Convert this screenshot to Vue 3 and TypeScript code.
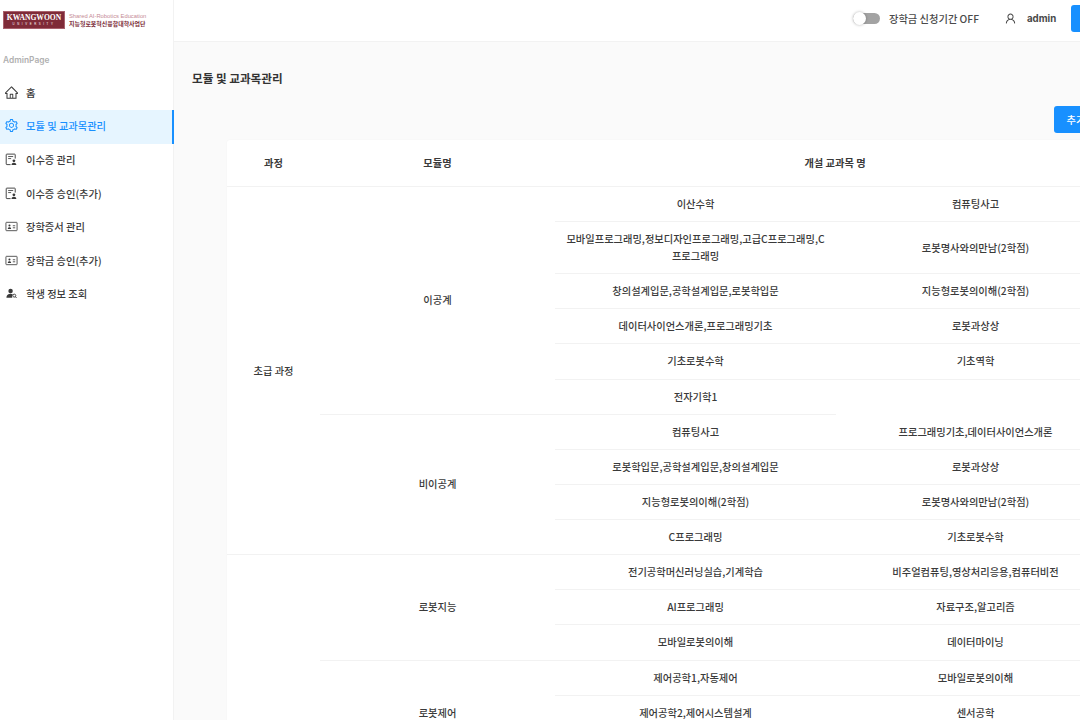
<script setup lang="ts">
interface Mod { name: string; rows: [string, string][] }
interface Section { name: string; mods: Mod[] }

const menu = [
  { label: '홈', icon: 'home' },
  { label: '모듈 및 교과목관리', icon: 'setting', active: true },
  { label: '이수증 관리', icon: 'file' },
  { label: '이수증 승인(추가)', icon: 'file' },
  { label: '장학증서 관리', icon: 'card' },
  { label: '장학금 승인(추가)', icon: 'card' },
  { label: '학생 정보 조회', icon: 'users' },
]

const sections: Section[] = [
  {
    name: '초급 과정',
    mods: [
      {
        name: '이공계',
        rows: [
          ['이산수학', '컴퓨팅사고'],
          ['모바일프로그래밍,정보디자인프로그래밍,고급C프로그래밍,C프로그래밍', '로봇명사와의만남(2학점)'],
          ['창의설계입문,공학설계입문,로봇학입문', '지능형로봇의이해(2학점)'],
          ['데이터사이언스개론,프로그래밍기초', '로봇과상상'],
          ['기초로봇수학', '기초역학'],
          ['전자기학1', ''],
        ],
      },
      {
        name: '비이공계',
        rows: [
          ['컴퓨팅사고', '프로그래밍기초,데이터사이언스개론'],
          ['로봇학입문,공학설계입문,창의설계입문', '로봇과상상'],
          ['지능형로봇의이해(2학점)', '로봇명사와의만남(2학점)'],
          ['C프로그래밍', '기초로봇수학'],
        ],
      },
    ],
  },
  {
    name: '',
    mods: [
      {
        name: '로봇지능',
        rows: [
          ['전기공학머신러닝실습,기계학습', '비주얼컴퓨팅,영상처리응용,컴퓨터비전'],
          ['AI프로그래밍', '자료구조,알고리즘'],
          ['모바일로봇의이해', '데이터마이닝'],
        ],
      },
      {
        name: '로봇제어',
        rows: [
          ['제어공학1,자동제어', '모바일로봇의이해'],
          ['제어공학2,제어시스템설계', '센서공학'],
          ['', ''],
        ],
      },
    ],
  },
]

const rowCount = (s: Section) => s.mods.reduce((n, m) => n + m.rows.length, 0)
</script>

<template>
  <div class="shell">
    <aside class="sidebar">
      <div class="logo">
        <div class="logo-mark">
          <span class="logo-name">KWANGWOON</span>
          <span class="logo-uni">UNIVERSITY</span>
        </div>
        <div class="logo-text">
          <span class="logo-en">Shared AI-Robotics Education</span>
          <span class="logo-ko">지능형로봇혁신융합대학사업단</span>
        </div>
      </div>
      <div class="admin-label">AdminPage</div>
      <nav class="menu">
        <a v-for="m in menu" :key="m.label" class="menu-item" :class="{ active: m.active }">
          <svg v-if="m.icon === 'home'" class="ic" viewBox="64 64 896 896" fill="currentColor"><path d="M946.5 505L560.1 118.8l-25.9-25.9a31.5 31.5 0 0 0-44.4 0L77.5 505a63.9 63.9 0 0 0-18.8 46c.4 35.2 29.7 63.3 64.9 63.3h42.5V940h691.8V614.3h43.4c17.1 0 33.2-6.7 45.3-18.8a63.6 63.6 0 0 0 18.7-45.3c0-17-6.7-33.1-18.8-45.2zM568 868H456V664h112v204zm217.9-325.7V868H632V640c0-22.1-17.9-40-40-40H432c-22.1 0-40 17.9-40 40v228H238.1V542.3h-96l370-369.7 23.1 23.1L882 542.3h-96.1z"/></svg>
          <svg v-else-if="m.icon === 'setting'" class="ic" viewBox="64 64 896 896" fill="currentColor"><path d="M924.8 625.7l-65.5-56c3.1-19 4.7-38.4 4.7-57.8s-1.6-38.8-4.7-57.8l65.5-56a32.03 32.03 0 0 0 9.3-35.2l-.9-2.6a443.74 443.74 0 0 0-79.7-137.9l-1.8-2.1a32.12 32.12 0 0 0-35.1-9.5l-81.3 28.9c-30-24.6-63.5-44-99.7-57.6l-15.7-85a32.05 32.05 0 0 0-25.8-25.7l-2.7-.5c-52.1-9.4-106.9-9.4-159 0l-2.7.5a32.05 32.05 0 0 0-25.8 25.7l-15.8 85.4a351.86 351.86 0 0 0-99 57.4l-81.9-29.1a32 32 0 0 0-35.1 9.5l-1.8 2.1a446.02 446.02 0 0 0-79.7 137.9l-.9 2.6c-4.5 12.5-.8 26.5 9.3 35.2l66.3 56.6c-3.1 18.8-4.6 38-4.6 57.1 0 19.2 1.5 38.4 4.6 57.1L99 625.5a32.03 32.03 0 0 0-9.3 35.2l.9 2.6c18.1 50.4 44.9 96.9 79.7 137.9l1.8 2.1a32.12 32.12 0 0 0 35.1 9.5l81.9-29.1c29.8 24.5 63.1 43.9 99 57.4l15.8 85.4a32.05 32.05 0 0 0 25.8 25.7l2.7.5a449.4 449.4 0 0 0 159 0l2.7-.5a32.05 32.05 0 0 0 25.8-25.7l15.7-85a350 350 0 0 0 99.7-57.6l81.3 28.9a32 32 0 0 0 35.1-9.5l1.8-2.1c34.8-41.1 61.6-87.5 79.7-137.9l.9-2.6c4.5-12.3.8-26.3-9.3-35zM788.3 465.9c2.5 15.1 3.8 30.6 3.8 46.1s-1.3 31-3.8 46.1l-6.6 40.1 74.7 63.9a370.03 370.03 0 0 1-42.6 73.6L721 702.8l-31.4 25.8c-23.9 19.6-50.5 35-79.3 45.8l-38.1 14.3-17.9 97a377.5 377.5 0 0 1-85 0l-17.9-97.2-37.8-14.5c-28.5-10.8-55-26.2-78.7-45.7l-31.4-25.9-93.4 33.2c-17-22.9-31.2-47.6-42.6-73.6l75.5-64.5-6.5-40c-2.4-14.9-3.7-30.3-3.7-45.5 0-15.3 1.2-30.6 3.7-45.5l6.5-40-75.5-64.5c11.3-26.1 25.6-50.7 42.6-73.6l93.4 33.2 31.4-25.9c23.7-19.5 50.2-34.9 78.7-45.7l37.9-14.3 17.9-97.2c28.1-3.2 56.8-3.2 85 0l17.9 97 38.1 14.3c28.7 10.8 55.4 26.2 79.3 45.8l31.4 25.8 92.8-32.9c17 22.9 31.2 47.6 42.6 73.6L781.8 426l6.5 39.9zM512 326c-97.2 0-176 78.8-176 176s78.8 176 176 176 176-78.8 176-176-78.8-176-176-176zm79.2 255.2A111.6 111.6 0 0 1 512 614c-29.9 0-58-11.7-79.2-32.8A111.6 111.6 0 0 1 400 502c0-29.9 11.7-58 32.8-79.2C454 401.6 482.1 390 512 390c29.9 0 58 11.6 79.2 32.8A111.6 111.6 0 0 1 624 502c0 29.9-11.7 58-32.8 79.2z"/></svg>
          <svg v-else-if="m.icon === 'file'" class="ic" viewBox="0 0 14 14" fill="none" stroke="currentColor"><path d="M6 12.5H2a.7.7 0 0 1-.7-.7V1.9A.7.7 0 0 1 2 1.2h8.3a.7.7 0 0 1 .7.7V6" stroke-width="1"/><path d="M3.4 3.8h5.4M3.4 6h3.2" stroke-width=".9"/><circle cx="9.6" cy="8.4" r="1.5" fill="currentColor" stroke="none"/><path d="M7 13c0-1.7 1.1-2.5 2.6-2.5s2.6.8 2.6 2.5z" fill="currentColor" stroke="none"/></svg>
          <svg v-else-if="m.icon === 'card'" class="ic" viewBox="0 0 14 14" fill="none" stroke="currentColor"><rect x="1" y="2.5" width="12" height="9" rx=".6" stroke-width=".9"/><circle cx="4.8" cy="6" r="1.1" fill="currentColor" stroke="none"/><path d="M3 9.6c0-1.3.8-1.9 1.8-1.9s1.8.6 1.8 1.9z" fill="currentColor" stroke="none"/><path d="M8.4 6.2h2.6M8.4 8.4h2.6" stroke-width=".9"/></svg>
          <svg v-else class="ic" viewBox="0 0 14 14" fill="currentColor"><circle cx="6" cy="4.2" r="2.4"/><path d="M1.5 11.6c0-2.9 2-4.2 4.5-4.2 1 0 1.9.2 2.6.6-.9.7-1.2 2.1-.7 3.6z"/><circle cx="10" cy="9.3" r="1.6" fill="none" stroke="currentColor" stroke-width="1"/><path d="M11.1 10.4l1.4 1.4" stroke="currentColor" stroke-width="1"/></svg>
          <span>{{ m.label }}</span>
        </a>
      </nav>
    </aside>

    <main class="main">
      <header class="topbar">
        <span class="switch"><span class="knob"></span></span>
        <span class="switch-label">장학금 신청기간 OFF</span>
        <svg class="user-ic" viewBox="64 64 896 896" fill="currentColor"><path d="M858.5 763.6a374 374 0 0 0-80.6-119.5 375.63 375.63 0 0 0-119.5-80.6c-.4-.2-.8-.3-1.2-.5C719.5 518 760 444.7 760 362c0-137-111-248-248-248S264 225 264 362c0 82.7 40.5 156 102.8 201.1-.4.2-.8.3-1.2.5-44.8 18.9-85 46-119.5 80.6a375.63 375.63 0 0 0-80.6 119.5A371.7 371.7 0 0 0 136 901.8a8 8 0 0 0 8 8.2h60c4.4 0 7.9-3.5 8-7.8 2-77.2 33-149.5 87.8-204.3 56.7-56.7 132-87.9 212.2-87.9s155.5 31.2 212.2 87.9C779 752.7 810 825 812 902.2c.1 4.4 3.6 7.8 8 7.8h60a8 8 0 0 0 8-8.2c-1-47.8-10.9-94.3-29.5-138.2zM512 534c-45.9 0-89.1-17.9-121.6-50.4S340 407.9 340 362c0-45.9 17.9-89.1 50.4-121.6S466.1 190 512 190s89.1 17.9 121.6 50.4S684 316.1 684 362c0 45.9-17.9 89.1-50.4 121.6S557.9 534 512 534z"/></svg>
        <span class="admin">admin</span>
        <button class="logout"></button>
      </header>

      <div class="content">
        <h1 class="title">모듈 및 교과목관리</h1>
        <div class="actions"><button class="add">추가</button></div>
        <table class="table">
          <colgroup>
            <col class="c1" /><col class="c2" /><col class="c3" /><col class="c4" />
          </colgroup>
          <thead>
            <tr>
              <th>과정</th>
              <th>모듈명</th>
              <th colspan="2">개설 교과목 명</th>
            </tr>
          </thead>
          <tbody>
            <template v-for="(s, si) in sections" :key="si">
              <template v-for="(m, mi) in s.mods" :key="mi">
                <tr v-for="(r, ri) in m.rows" :key="ri">
                  <td v-if="mi === 0 && ri === 0" :rowspan="rowCount(s)">{{ s.name }}</td>
                  <td v-if="ri === 0" :rowspan="m.rows.length">{{ m.name }}</td>
                  <td>{{ r[0] }}</td>
                  <td :class="{ 'no-line': r[0] !== '' && r[1] === '' }">{{ r[1] }}</td>
                </tr>
              </template>
            </template>
          </tbody>
        </table>
      </div>
    </main>
  </div>
</template>

<style>
html, body { margin: 0; overflow: hidden; }
</style>

<style scoped>
.shell {
  width: 1080px;
  height: 720px;
  overflow: hidden;
  display: flex;
  background: #fafafa;
  color: #3a3a3a;
  font-family: "Noto Sans CJK KR", "Noto Sans", Inter, sans-serif;
  font-size: 10.25px;
}
.sidebar {
  flex: none;
  width: 174px;
  box-sizing: border-box;
  background: #fff;
  border-right: 1px solid #f2f2f2;
}
.logo {
  height: 42px;
  box-sizing: border-box;
  padding: 11px 0 0 3px;
  display: flex;
  gap: 4px;
}
.logo-mark {
  width: 62px;
  height: 18px;
  box-sizing: border-box;
  border: 1px solid #a8606c;
  background: #7f2b38;
  color: #fff;
  display: flex;
  flex-direction: column;
  align-items: center;
  justify-content: center;
  line-height: 1;
}
.logo-name { font-family: "Liberation Serif", serif; font-size: 7.6px; font-weight: 700; white-space: nowrap; }
.logo-uni { font-family: "Liberation Sans", sans-serif; font-size: 2.8px; letter-spacing: 2.6px; margin-top: 1px; white-space: nowrap; }
.logo-text { display: flex; flex-direction: column; line-height: 8px; padding-top: 1px; white-space: nowrap; }
.logo-en { font-family: "Liberation Sans", sans-serif; font-size: 5.8px; color: #c58a94; }
.logo-ko { font-size: 5.95px; font-weight: 700; color: #7a2a36; }
.admin-label {
  margin: 11px 0 0 3px;
  line-height: 14px;
  font-size: 8.4px;
  font-weight: 600;
  color: #b0b0b0;
  font-family: Inter, "Noto Sans", sans-serif;
}
.menu { margin-top: 9.5px; display: flex; flex-direction: column; }
.menu-item {
  height: 33.6px;
  box-sizing: border-box;
  padding: 0 0 2px 5px;
  display: flex;
  align-items: center;
  gap: 8px;
  color: #3a3a3a;
  font-weight: 500;
  white-space: nowrap;
}
.menu-item.active {
  background: #e6f5ff;
  color: #1890ff;
  margin-right: -1px;
  border-right: 2px solid #1890ff;
}
.ic { width: 13px; height: 13px; flex: none; }
.main { flex: none; width: 960px; display: flex; flex-direction: column; }
.topbar {
  flex: none;
  height: 42px;
  box-sizing: border-box;
  background: #fff;
  border-bottom: 1px solid #f2f2f2;
  display: flex;
  align-items: center;
  padding: 0 0 4px 679px;
  font-weight: 500;
}
.switch {
  flex: none;
  width: 27px;
  height: 11px;
  border-radius: 6px;
  background: #a3a3a3;
  position: relative;
  margin-right: 9px;
}
.knob {
  position: absolute;
  left: 0;
  top: -1px;
  width: 13px;
  height: 13px;
  border-radius: 50%;
  background: #fff;
  box-shadow: 0 0 3px rgba(0, 0, 0, 0.3);
}
.switch-label { width: 90px; flex: none; white-space: nowrap; margin-right: 26px; color: #4a4a4a; }
.user-ic { flex: none; width: 11px; height: 11px; color: #444; margin-right: 11px; }
.admin { flex: none; width: 30px; font-family: Inter, sans-serif; font-weight: 700; font-size: 9.7px; margin-right: 14px; color: #4a4a4a; }
.logout {
  flex: none;
  width: 63px;
  height: 27px;
  border: 0;
  border-radius: 3px;
  background: #1890ff;
}
.content { padding: 0 19px 0 18px; }
.title {
  margin: 28px 0 0;
  font-size: 11.6px;
  line-height: 17px;
  font-weight: 700;
  color: #333;
}
.actions { margin-top: 19px; display: flex; justify-content: flex-end; }
.add {
  width: 44px;
  height: 27px;
  margin-right: 17px;
  border: 0;
  border-radius: 3px;
  background: #1890ff;
  color: #fff;
  font: inherit;
  font-weight: 500;
  white-space: nowrap;
}
.table {
  margin: 7px 0 0 35px;
  width: 888px;
  table-layout: fixed;
  border-collapse: separate;
  border-spacing: 0;
  background: #fff;
  border-radius: 3px;
  box-shadow: 0 0 2px rgba(0, 0, 0, 0.04);
}
.c1 { width: 93px; }
.c2 { width: 235px; }
.c3 { width: 281px; }
.c4 { width: 279px; }
th {
  height: 47px;
  box-sizing: border-box;
  padding: 0 0 2px;
  font-weight: 700;
  text-align: center;
  border-bottom: 1px solid #f2f2f2;
}
td {
  height: 35.14px;
  box-sizing: border-box;
  padding: 8px 10px 9px;
  line-height: 17px;
  text-align: center;
  font-weight: 500;
  border-bottom: 1px solid #f2f2f2;
}
td.no-line { border-bottom: 0; }
</style>
